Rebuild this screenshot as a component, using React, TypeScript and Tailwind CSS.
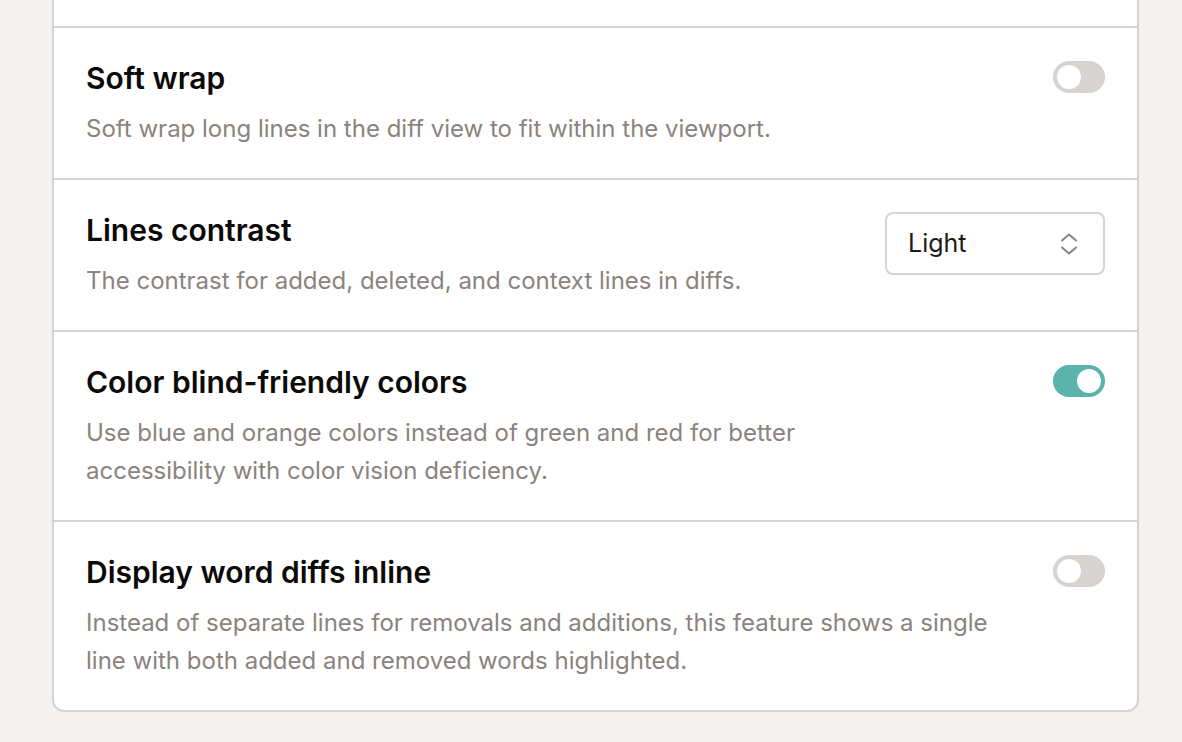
type Row = {
  title: string;
  lines: string[];
  control: 'off' | 'on' | 'select';
};

const rows: Row[] = [
  {
    title: 'Soft wrap',
    lines: ['Soft wrap long lines in the diff view to fit within the viewport.'],
    control: 'off',
  },
  {
    title: 'Lines contrast',
    lines: ['The contrast for added, deleted, and context lines in diffs.'],
    control: 'select',
  },
  {
    title: 'Color blind-friendly colors',
    lines: [
      'Use blue and orange colors instead of green and red for better',
      'accessibility with color vision deficiency.',
    ],
    control: 'on',
  },
  {
    title: 'Display word diffs inline',
    lines: [
      'Instead of separate lines for removals and additions, this feature shows a single',
      'line with both added and removed words highlighted.',
    ],
    control: 'off',
  },
];

function Toggle({ on }: { on: boolean }) {
  return (
    <div
      className={`mt-[1px] flex h-8 w-[52px] shrink-0 items-center rounded-full px-1 ${
        on ? 'justify-end bg-[#5ab3ad]' : 'justify-start bg-[#d6d3d0]'
      }`}
    >
      <div className="h-6 w-6 rounded-full bg-white" />
    </div>
  );
}

function UpDown() {
  return (
    <svg width="18" height="24" viewBox="0 0 18 24" fill="none" stroke="#8a837e" strokeWidth="2" strokeLinecap="round" strokeLinejoin="round">
      <path d="M2 8.5 L9 2.5 L16 8.5" />
      <path d="M2 15.5 L9 21.5 L16 15.5" />
    </svg>
  );
}

function Select() {
  return (
    <div className="flex h-[63px] w-[220px] shrink-0 items-center justify-between rounded-lg border-2 border-[#d6d3d0] bg-white pl-[21px] pr-[25px]">
      <span className="text-[25px] text-[#1c1917]">Light</span>
      <UpDown />
    </div>
  );
}

export default function App() {
  return (
    <div
      className="min-h-screen bg-[#f3f2f0] pb-[31px]"
      style={{ fontFamily: 'Inter, "Noto Sans", sans-serif' }}
    >
      <div className="ml-[52px] w-[1087px] overflow-hidden rounded-b-xl border-2 border-t-0 border-[#d6d3d0] bg-white">
        {/* tail of the previous section */}
        <div className="h-[26px]" />

        {rows.map((row) => (
          <div
            key={row.title}
            className="flex items-start gap-6 border-t-2 border-[#d6d3d0] pb-[30px] pl-8 pr-8 pt-8"
          >
            <div className="min-w-0 flex-1">
              <h3 className="text-[30px] font-semibold leading-[36px] text-[#0c0a09]">
                {row.title}
              </h3>
              <p className="mt-[14px] text-[24px] leading-[38px] text-[#8a837e]">
                {row.lines.map((l, i) => (
                  <span key={i}>
                    {l}
                    {i < row.lines.length - 1 && <br />}
                  </span>
                ))}
              </p>
            </div>
            {row.control === 'select' ? <Select /> : <Toggle on={row.control === 'on'} />}
          </div>
        ))}
      </div>
    </div>
  );
}
